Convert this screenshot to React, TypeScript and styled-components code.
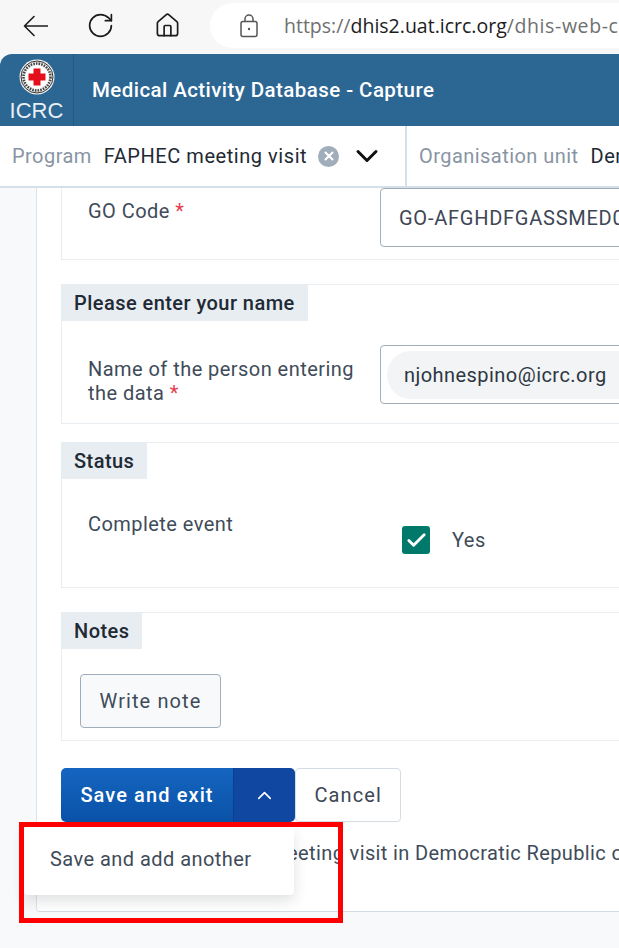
import styled, { createGlobalStyle } from "styled-components";
import { RotateCw, Home, ChevronDown, ChevronUp, Check, X } from "lucide-react";

const GlobalStyle = createGlobalStyle`
  html, body {
    margin: 0;
    padding: 0;
    background: #f8f9fa;
  }
  body {
    font-family: Roboto, "Liberation Sans", sans-serif;
    letter-spacing: 0.45px;
    color: #404b5a;
  }
  * {
    box-sizing: border-box;
  }
`;

const Page = styled.div`
  position: relative;
  width: 619px;
  height: 948px;
  overflow: hidden;
  background: #f8f9fa;
`;

const BrowserBar = styled.div`
  height: 54px;
  display: flex;
  align-items: center;
  padding: 0 0 3px 20px;
  background: #f7f7f7;
  color: #1c1c1c;
`;

const NavButton = styled.div<{ $w: number }>`
  width: ${(p) => p.$w}px;
  display: flex;
  flex-shrink: 0;
`;

const UrlPill = styled.div`
  flex: 1;
  min-width: 0;
  height: 45px;
  margin-left: 16px;
  padding-left: 30px;
  display: flex;
  align-items: center;
  gap: 26px;
  background: #fff;
  border-radius: 23px 0 0 23px;
  overflow: hidden;
`;

const LockIcon = styled.svg`
  flex-shrink: 0;
`;

const UrlText = styled.div`
  font-family: "Open Sans", sans-serif;
  font-size: 19.5px;
  letter-spacing: 0;
  white-space: nowrap;
  color: #6f6f6f;
  b {
    font-weight: 400;
    color: #1c1c1c;
  }
  span {
    letter-spacing: 0.6px;
  }
`;

const AppHeader = styled.header`
  height: 72px;
  display: flex;
  align-items: center;
  background: #2c6693;
  border-top-left-radius: 12px;
  overflow: hidden;
`;

const LogoTile = styled.div`
  width: 74px;
  height: 100%;
  padding-top: 5px;
  display: flex;
  flex-direction: column;
  align-items: center;
  border-right: 1px solid #27597f;
  flex-shrink: 0;
`;

const LogoText = styled.span`
  font-family: "Liberation Sans", sans-serif;
  font-size: 22px;
  line-height: 26px;
  letter-spacing: 0;
  margin-top: 3px;
  color: #e8f0f6;
`;

const AppTitle = styled.div`
  margin-left: 18px;
  font-size: 20.5px;
  font-weight: 500;
  letter-spacing: 0.43px;
  color: #fff;
  white-space: nowrap;
`;

const ContextBar = styled.div`
  height: 62px;
  display: flex;
  align-items: stretch;
  background: #fff;
  border-bottom: 2px solid #d5dfe9;
  white-space: nowrap;
  overflow: hidden;
`;

const ContextItem = styled.div<{ $divider?: boolean }>`
  display: flex;
  align-items: center;
  flex-shrink: 0;
  padding-left: 12px;
  ${(p) => (p.$divider ? "border-left: 2px solid #d5dfe9;" : "width: 405px;")}
`;

const ContextLabel = styled.span`
  font-size: 20px;
  color: #8894a3;
  margin-right: 12px;
`;

const ContextValue = styled.span`
  font-size: 20px;
  letter-spacing: 0.55px;
  color: #212934;
`;

const ClearIcon = styled.span`
  width: 21px;
  height: 21px;
  margin-left: 11px;
  border-radius: 50%;
  background: #a0adba;
  color: #fff;
  display: flex;
  align-items: center;
  justify-content: center;
`;

const Chevron = styled.span`
  margin-left: 10px;
  display: flex;
  color: #111;
`;

const Workspace = styled.main`
  width: 700px;
  margin-left: 36px;
  height: 724px;
  padding: 0 0 0 24px;
  background: #fff;
  border-left: 1px solid #dce3ea;
  border-bottom: 1px solid #d5dce4;
  border-bottom-left-radius: 4px;
`;

const Section = styled.section<{ $h: number; $mb: number; $open?: boolean }>`
  height: ${(p) => p.$h}px;
  margin-bottom: ${(p) => p.$mb}px;
  background: #fff;
  border: 1px solid #e8edf2;
  ${(p) => (p.$open ? "border-top: none;" : "")}
`;

const SectionTitle = styled.h3`
  display: inline-block;
  margin: -1px 0 0 -1px;
  height: 37px;
  padding: 0 13px;
  font-size: 20px;
  font-weight: 500;
  line-height: 39px;
  color: #212934;
  background: #e8edf2;
  vertical-align: top;
`;

const Field = styled.div<{ $pt: number }>`
  display: grid;
  grid-template-columns: 292px 1fr;
  padding: ${(p) => p.$pt}px 0 0 26px;
`;

const FieldLabel = styled.div<{ $pt: number }>`
  padding-top: ${(p) => p.$pt}px;
  font-size: 20px;
  line-height: 24px;
  color: #404b5a;
`;

const Required = styled.span`
  color: #e53e4d;
`;

const TextInput = styled.div<{ $h: number }>`
  height: ${(p) => p.$h}px;
  display: flex;
  align-items: center;
  padding: 0 18px;
  font-size: 20px;
  letter-spacing: 0.75px;
  color: #3d4655;
  white-space: nowrap;
  overflow: hidden;
  border: 1px solid #a0adba;
  border-radius: 4px;
`;

const ChipInput = styled(TextInput)`
  padding: 0 6px;
  letter-spacing: 0.45px;
`;

const Chip = styled.span`
  display: flex;
  align-items: center;
  height: 48px;
  padding: 0 60px 0 17px;
  border-radius: 24px;
  background: #f3f4f6;
  font-size: 20px;
  color: #2e3742;
`;

const CheckRow = styled.div`
  display: flex;
  align-items: center;
  gap: 22px;
  padding: 13px 0 0 22px;
  font-size: 20px;
  line-height: 30px;
  color: #404b5a;
`;

const CheckBox = styled.span`
  width: 28px;
  height: 28px;
  display: flex;
  align-items: center;
  justify-content: center;
  border-radius: 3px;
  background: #00796b;
  color: #fff;
`;

const NoteRow = styled.div`
  padding: 25px 0 0 18px;
`;

const Button = styled.button<{ $variant?: "primary" | "toggle" | "light" }>`
  height: 54px;
  font-family: inherit;
  font-size: 20px;
  letter-spacing: 1.1px;
  padding: 0 18.5px;
  border: 1px solid #d5dce4;
  border-radius: 4px;
  background: #fff;
  color: #3d4655;
  display: flex;
  align-items: center;
  justify-content: center;
  ${(p) =>
    p.$variant === "light" &&
    "border-color: #a0adba; background: #f8f9fa; color: #404b5a;"}
  ${(p) =>
    p.$variant === "primary" &&
    `
      width: 172px;
      font-weight: 500;
      color: #fff;
      border: none;
      border-radius: 5px 0 0 5px;
      background: linear-gradient(180deg, #1565c0, #0a52a8);
    `}
  ${(p) =>
    p.$variant === "toggle" &&
    `
      width: 62px;
      padding: 0;
      color: #fff;
      border: none;
      border-left: 1px solid #0b3f8c;
      border-radius: 0 5px 5px 0;
      background: #0f47a1;
    `}
`;

const Actions = styled.div`
  display: flex;
  margin-top: 27px;
`;

const Hint = styled.div`
  margin: 17px 0 0 0;
  font-size: 20px;
  line-height: 28px;
  letter-spacing: 0.38px;
  color: #404b5a;
  white-space: nowrap;
`;

const Menu = styled.div`
  position: absolute;
  left: 24px;
  top: 827px;
  width: 270px;
  height: 68px;
  padding: 18px 0 0 26px;
  font-size: 20px;
  line-height: 28px;
  color: #404b5a;
  background: #fff;
  border-radius: 4px;
  box-shadow: 0 6px 14px rgba(33, 41, 52, 0.14);
`;

const Highlight = styled.div`
  position: absolute;
  left: 19px;
  top: 822px;
  width: 324px;
  height: 101px;
  border: 5px solid #fe0000;
  pointer-events: none;
`;

function BackArrow() {
  return (
    <svg width="28" height="24" viewBox="0 0 28 24" fill="none" stroke="#1c1c1c" strokeWidth="1.6" strokeLinecap="round" strokeLinejoin="round">
      <path d="M4.5 12h23M14 2.5 4.5 12l9.5 9.5" />
    </svg>
  );
}

function Lock() {
  return (
    <LockIcon width="18" height="24" viewBox="0 0 18 24" fill="none" stroke="#555" strokeWidth="1.5">
      <rect x="1" y="7.5" width="16" height="15" rx="2" />
      <path d="M5 7.5V5a4 4 0 0 1 8 0v2.5" />
      <circle cx="9" cy="15" r="1.2" fill="#555" stroke="none" />
    </LockIcon>
  );
}

function IcrcLogo() {
  return (
    <svg width="36" height="36" viewBox="0 0 36 36">
      <circle cx="18" cy="18" r="17.5" fill="#f2f2f2" />
      <circle cx="18" cy="18" r="16" fill="none" stroke="#333" strokeWidth="1" />
      <circle cx="18" cy="18" r="13.5" fill="none" stroke="#444" strokeWidth="2.6" strokeDasharray="1.6 1.1" />
      <circle cx="18" cy="18" r="11.4" fill="#fff" />
      <path d="M14.5 9.5h7v5h5v7h-5v5h-7v-5h-5v-7h5z" fill="#e3101c" />
    </svg>
  );
}

export default function App() {
  return (
    <Page>
      <GlobalStyle />
      <BrowserBar>
        <NavButton $w={66}>
          <BackArrow />
        </NavButton>
        <NavButton $w={68}>
          <RotateCw size={29} strokeWidth={1.4} />
        </NavButton>
        <NavButton $w={40}>
          <Home size={27} strokeWidth={1.5} />
        </NavButton>
        <UrlPill>
          <Lock />
          <UrlText>
            https://<b>dhis2.uat.icrc.org</b>
            <span>/dhis-web-capture/index.html</span>
          </UrlText>
        </UrlPill>
      </BrowserBar>

      <AppHeader>
        <LogoTile>
          <IcrcLogo />
          <LogoText>ICRC</LogoText>
        </LogoTile>
        <AppTitle>Medical Activity Database - Capture</AppTitle>
      </AppHeader>

      <ContextBar>
        <ContextItem>
          <ContextLabel>Program</ContextLabel>
          <ContextValue>FAPHEC meeting visit</ContextValue>
          <ClearIcon>
            <X size={14} strokeWidth={3.5} />
          </ClearIcon>
          <Chevron>
            <ChevronDown size={36} strokeWidth={2} />
          </Chevron>
        </ContextItem>
        <ContextItem $divider>
          <ContextLabel>Organisation unit</ContextLabel>
          <ContextValue>Democratic Republic of Congo</ContextValue>
        </ContextItem>
      </ContextBar>

      <Workspace>
        <Section $h={72} $mb={24} $open>
          <Field $pt={0}>
            <FieldLabel $pt={11}>
              GO Code <Required>*</Required>
            </FieldLabel>
            <TextInput $h={59}>GO-AFGHDFGASSMED00123456</TextInput>
          </Field>
        </Section>

        <Section $h={140} $mb={18}>
          <SectionTitle>Please enter your name</SectionTitle>
          <Field $pt={24}>
            <FieldLabel $pt={12}>
              Name of the person entering the data <Required>*</Required>
            </FieldLabel>
            <ChipInput $h={59}>
              <Chip>njohnespino@icrc.org</Chip>
            </ChipInput>
          </Field>
        </Section>

        <Section $h={146} $mb={24}>
          <SectionTitle>Status</SectionTitle>
          <Field $pt={33}>
            <FieldLabel $pt={0}>Complete event</FieldLabel>
            <CheckRow>
              <CheckBox>
                <Check size={23} strokeWidth={3} />
              </CheckBox>
              Yes
            </CheckRow>
          </Field>
        </Section>

        <Section $h={129} $mb={0}>
          <SectionTitle>Notes</SectionTitle>
          <NoteRow>
            <Button $variant="light">Write note</Button>
          </NoteRow>
        </Section>

        <Actions>
          <Button $variant="primary">Save and exit</Button>
          <Button $variant="toggle">
            <ChevronUp size={23} strokeWidth={1.7} />
          </Button>
          <Button>Cancel</Button>
        </Actions>

        <Hint>Saving a new FAPHEC meeting visit in Democratic Republic of Congo</Hint>
      </Workspace>

      <Menu>Save and add another</Menu>
      <Highlight />
    </Page>
  );
}
